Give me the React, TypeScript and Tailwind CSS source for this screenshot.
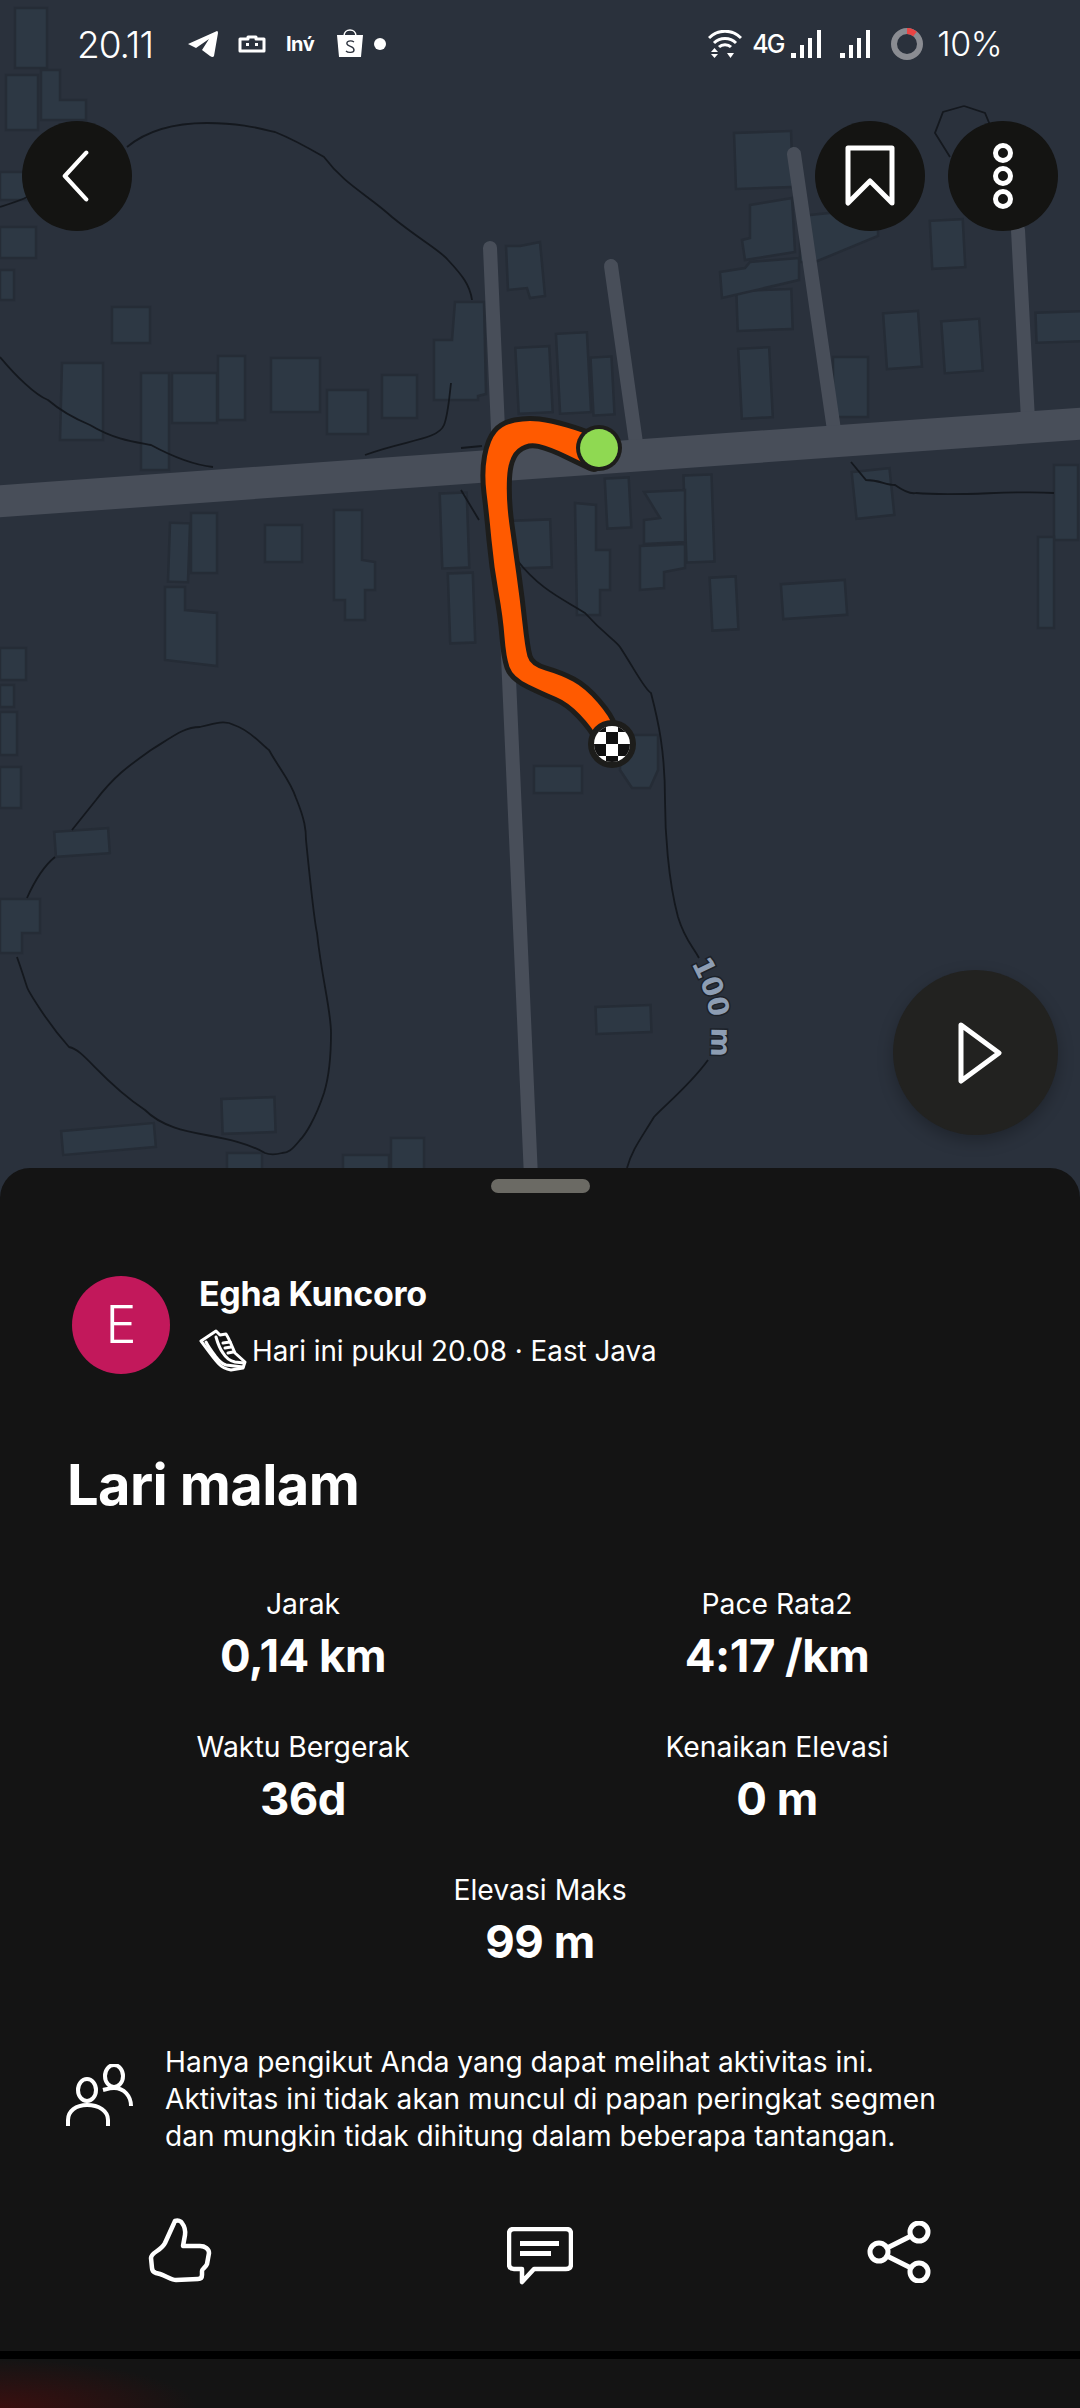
import React from "react";

const font = { fontFamily: "Inter, 'Liberation Sans', sans-serif" };

// x, y, w, h, rotation
const houses: number[][] = [
  [15, 8, 32, 60, 0], [6, 75, 32, 55, 0], [0, 172, 34, 28, 0], [0, 227, 36, 31, 0], [0, 270, 14, 30, 0],
  [112, 307, 38, 36, 0], [735, 132, 57, 56, -2], [737, 290, 55, 40, -2], [931, 220, 33, 48, -3],
  [885, 312, 35, 56, -4], [943, 320, 38, 52, -4], [1036, 312, 46, 30, -2], [740, 348, 31, 70, -3],
  [833, 357, 35, 60, 0], [517, 347, 34, 66, -3], [558, 333, 31, 80, -3], [592, 357, 21, 58, -3],
  [382, 375, 35, 43, 0], [327, 390, 41, 44, 0], [271, 358, 49, 54, 0], [141, 373, 28, 97, 0],
  [172, 373, 45, 50, 0], [218, 356, 27, 64, 0], [169, 523, 20, 59, 2], [191, 513, 26, 60, 0],
  [265, 525, 37, 37, 0], [441, 493, 27, 75, -2], [449, 573, 25, 70, -2], [513, 520, 38, 48, -2],
  [606, 478, 24, 50, -3], [685, 475, 28, 87, -2], [711, 577, 26, 53, -3], [782, 582, 64, 35, -4],
  [854, 470, 38, 47, -6], [1054, 465, 24, 75, 0], [1038, 537, 16, 91, 0], [0, 648, 26, 32, 0],
  [0, 685, 14, 22, 0], [0, 712, 17, 43, 0], [0, 767, 21, 41, 0], [534, 766, 48, 27, 0],
  [55, 830, 54, 25, -4], [596, 1006, 55, 27, -2], [222, 1098, 53, 35, -2], [62, 1127, 93, 24, -5],
  [227, 1153, 35, 20, 0], [343, 1155, 46, 20, 0], [391, 1138, 33, 35, 0],
];

const housesPoly = [
  "41,70 60,70 60,100 86,100 86,120 41,120",
  "520,246 540,242 545,296 530,298 527,288 508,290 506,246",
  "455,302 484,302 486,394 478,396 478,400 434,400 434,340 452,340",
  "750,205 792,198 795,252 745,260 742,240 750,238",
  "800,216 878,208 878,236 815,262 800,262",
  "720,272 745,268 750,262 799,258 799,280 722,298",
  "62,363 103,363 103,440 60,440",
  "165,587 185,587 185,610 217,613 217,666 165,660",
  "334,510 362,510 362,560 375,562 375,590 365,590 365,620 345,620 345,600 334,600",
  "575,503 596,505 596,550 610,550 610,590 600,590 600,615 577,615",
  "644,492 685,490 685,542 644,544 644,520 660,518",
  "640,546 685,544 685,568 664,572 664,588 640,590",
  "0,899 40,899 40,933 22,933 22,953 0,953",
  "620,735 658,735 658,770 650,788 632,788 620,770",
];

const contours = [
  "M0 207 C12 203 22 200 27 197 M127 147 C150 128 178 123 207 123 C240 123 258 128 275 132 C295 140 312 150 324 157 C345 185 368 195 392 217 C420 240 440 250 448 260 C462 275 470 285 472 300",
  "M0 357 C15 375 35 395 48 400 C62 412 78 420 90 425 C115 440 135 442 151 445 C175 458 195 465 213 467",
  "M451 383 C449 400 448 415 444 425 C438 440 405 440 365 455 M461 448 L482 446",
  "M461 490 L479 520 M517 560 C540 590 565 600 585 613 C605 635 615 640 620 647 C635 670 645 690 651 693 C658 720 665 750 665 800 C665 830 668 880 678 917 C685 940 692 945 699 958 M708 1060 C690 1085 665 1105 654 1117 C640 1140 632 1150 627 1168",
  "M96 800 C115 775 130 765 151 750 C175 735 185 727 200 727 C215 723 225 720 234 725 C250 730 262 745 269 750 C280 770 290 780 296 798 C305 820 306 830 306 840 C310 880 314 920 317 933 C322 980 331 1010 331 1033 C331 1060 328 1080 324 1093 C315 1120 305 1135 300 1140 C292 1150 288 1153 282 1153 C275 1155 270 1155 265 1153 C225 1130 175 1140 145 1110 C100 1080 85 1050 69 1047 C45 1020 28 990 27 987 C20 965 18 960 17 957 M27 898 C35 880 45 865 55 857 M72 830 L96 800",
  "M851 462 L866 480 C880 480 885 485 895 485 C905 492 912 494 916 493 C960 497 1010 490 1054 493",
  "M964 106 L985 113 L990 125 M964 106 L943 112 L935 133 L950 157",
];

// the track is uneven in width, so it's traced as an outline
const routeOutline = [
  [599, 440], [582, 432], [551, 423], [527, 420], [503, 425], [490, 440], [484, 473], [489, 513], [494, 567],
  [503, 617], [506, 657], [513, 677], [544, 692], [568, 702], [592, 727], [604, 750], [615, 735], [610, 717],
  [585, 688], [561, 675], [530, 666], [525, 647], [520, 600], [513, 550], [506, 500], [508, 457], [527, 441],
  [551, 447], [582, 462], [599, 470],
];

function smooth(pts: number[][]) {
  const mid = (a: number[], b: number[]) => `${(a[0] + b[0]) / 2} ${(a[1] + b[1]) / 2}`;
  let d = `M${mid(pts[pts.length - 1], pts[0])}`;
  pts.forEach((p, i) => {
    d += ` Q${p[0]} ${p[1]} ${mid(p, pts[(i + 1) % pts.length])}`;
  });
  return d + " Z";
}

function MapLayer() {
  return (
    <svg viewBox="0 0 1080 1200" className="block w-full h-full">
      <g fill="#2d3844" stroke="#252c36" strokeWidth="2.5">
        {houses.map(([x, y, w, h, r], i) => (
          <rect key={i} x={x} y={y} width={w} height={h} transform={`rotate(${r} ${x + w / 2} ${y + h / 2})`} />
        ))}
        {housesPoly.map((p, i) => (
          <polygon key={i} points={p} />
        ))}
      </g>
      <g fill="none" stroke="#14181e" strokeWidth="1.8">
        {contours.map((d, i) => (
          <path key={i} d={d} />
        ))}
      </g>
      <g stroke="#484e59" strokeLinecap="round" fill="none">
        <path d="M490 248 L532 1200" strokeWidth="14" />
        <path d="M611 266 L637 450" strokeWidth="14" />
        <path d="M794 154 L834 430" strokeWidth="14" />
        <path d="M1018 230 L1028 420" strokeWidth="14" />
        <path d="M-10 502 L1090 423" strokeWidth="32" strokeLinecap="butt" />
      </g>
      <path id="label100" d="M691 963 C705 990 715 1015 710 1062" fill="none" />
      <text fill="#8d9db3" stroke="#1c2129" strokeWidth="3" paintOrder="stroke" fontSize="28" fontWeight="700" fontFamily="'DejaVu Sans', sans-serif">
        <textPath href="#label100">100 m</textPath>
      </text>
      <path d={smooth(routeOutline)} fill="#ff5a00" stroke="#1d1d1b" strokeWidth="10" paintOrder="stroke" strokeLinejoin="round" />
      <circle cx="599" cy="448" r="23" fill="#1d1d1b" />
      <circle cx="599" cy="448" r="19" fill="#8fd952" />
      <circle cx="612" cy="744" r="24" fill="#1d1d1b" />
      <clipPath id="flag">
        <circle cx="612" cy="744" r="18" />
      </clipPath>
      <g clipPath="url(#flag)">
        <rect x="594" y="726" width="36" height="36" fill="#ffffff" />
        <path d="M606 732h12v12h-12z M606 756h12v12h-12z M594 744h12v12h-12z M618 744h12v12h-12z M594 720h12v12h-12z M618 720h12v12h-12z" fill="#111111" />
      </g>
    </svg>
  );
}

function StatusBar() {
  return (
    <div className="absolute top-[26px] left-0 w-full h-[36px] flex items-center justify-between pl-[77px] pr-[78px] text-white">
      <div className="flex items-center">
        <span className="text-[37px] font-light leading-none tracking-[-1px]">20.11</span>
        <svg viewBox="0 0 30 26" className="w-[30px] h-[26px] ml-[35px]" fill="#ffffff">
          <path d="M0 13 L29 0 Q30 0 30 2 L26 25 Q25 27 22 25 L14 19 L21 8 L8 17 Z" />
        </svg>
        <svg viewBox="0 0 28 18" className="w-[28px] h-[18px] ml-[20px]" fill="none">
          <path d="M2 4 H10 V2 H18 V4 H26 V16 H2 Z" stroke="#ffffff" strokeWidth="3" strokeLinejoin="round" />
          <rect x="8" y="8" width="3" height="3" fill="#ffffff" />
          <rect x="17" y="8" width="3" height="3" fill="#ffffff" />
        </svg>
        <span className="ml-[20px] w-[30px] text-[20px] font-bold leading-none tracking-[-0.5px]">Inv́</span>
        <svg viewBox="0 0 28 30" className="w-[28px] h-[30px] ml-[20px] -mt-[2px]">
          <path d="M8 8 C8 0 20 0 20 8" fill="none" stroke="#ffffff" strokeWidth="1.6" />
          <path d="M1 7 H27 L25 29 H3 Z" fill="#ffffff" />
          <path d="M18 14 C15 12 10 13 11 16 C12 19 18 18 18 22 C18 25 12 25 10 23" fill="none" stroke="#2a303c" strokeWidth="1.4" />
        </svg>
        <span className="w-[12px] h-[12px] rounded-full bg-white ml-[10px]" />
      </div>
      <div className="flex items-center">
        <svg viewBox="0 0 34 28" className="w-[34px] h-[28px]" fill="none" stroke="#ffffff" strokeWidth="3">
          <path d="M1 8 C10 -1 24 -1 33 8" />
          <path d="M6 13 C12 7 22 7 28 13" />
          <path d="M11 17 C14 14 20 14 23 17" />
          <path d="M3 22 H10 L6.500 18 Z M3 24 H10 L6.500 28 Z" fill="#ffffff" stroke="none" />
          <path d="M19 23 H26 L22.500 28 Z" fill="#ffffff" stroke="none" />
        </svg>
        <span className="ml-[10px] w-[30px] text-[25px] font-medium leading-none tracking-[-2px]">4G</span>
        {[0, 1].map((k) => (
          <svg key={k} viewBox="0 0 31 28" className={k === 0 ? "w-[31px] h-[28px] ml-[9px]" : "w-[31px] h-[28px] ml-[18px]"} fill="#ffffff">
            <rect x="0" y="23" width="5" height="5" />
            <rect x="9" y="15" width="4" height="13" />
            <rect x="17" y="8" width="4" height="20" />
            <rect x="26" y="0" width="4" height="28" />
          </svg>
        ))}
        <svg viewBox="0 0 32 32" className="w-[32px] h-[32px] ml-[20px]" fill="none">
          <circle cx="16" cy="16" r="13" stroke="#8a8c92" strokeWidth="6" />
          <path d="M16 3 A13 13 0 0 1 24 6" stroke="#e94444" strokeWidth="6" />
        </svg>
        <span className="ml-[14px] text-[34px] font-light leading-none tracking-[-0.5px]">10%</span>
      </div>
    </div>
  );
}

function RoundButton({ className, children }: { className: string; children: React.ReactNode }) {
  return (
    <div className={`absolute rounded-full flex items-center justify-center ${className}`}>{children}</div>
  );
}

function Stat({ label, value, className }: { label: string; value: string; className?: string }) {
  return (
    <div className={`flex flex-col items-center text-white ${className ?? ""}`}>
      <span className="text-[28.300px] leading-[36px] font-normal">{label}</span>
      <span className="text-[45.500px] leading-[54px] font-bold mt-[7px] tracking-[-0.5px]">{value}</span>
    </div>
  );
}

export default function App() {
  return (
    <div className="relative w-[1080px] h-[2408px] flex flex-col bg-[#141414] overflow-hidden" style={font}>
      <div className="relative w-full h-[1200px] shrink-0 bg-[#2a313c]">
        <MapLayer />
        <StatusBar />
        <RoundButton className="left-[22px] top-[121px] w-[110px] h-[110px] bg-[#141412]">
          <svg viewBox="0 0 30 54" className="w-[28px] h-[52px] -ml-[2px]" fill="none" stroke="#ffffff" strokeWidth="4.500" strokeLinecap="round" strokeLinejoin="round">
            <path d="M26 2 L3 27 L26 52" />
          </svg>
        </RoundButton>
        <RoundButton className="left-[815px] top-[121px] w-[110px] h-[110px] bg-[#141412]">
          <svg viewBox="0 0 50 62" className="w-[50px] h-[62px]" fill="none" stroke="#ffffff" strokeWidth="5" strokeLinejoin="round">
            <path d="M3 3 H47 V58 L25 36 L3 58 Z" />
          </svg>
        </RoundButton>
        <RoundButton className="left-[948px] top-[121px] w-[110px] h-[110px] bg-[#141412]">
          <svg viewBox="0 0 22 66" className="w-[22px] h-[66px]" fill="none" stroke="#ffffff" strokeWidth="5">
            <circle cx="11" cy="10" r="7.500" />
            <circle cx="11" cy="33" r="7.500" />
            <circle cx="11" cy="56" r="7.500" />
          </svg>
        </RoundButton>
        <RoundButton className="left-[893px] top-[970px] w-[165px] h-[165px] bg-[#222220] shadow-[0_6px_16px_rgba(0,0,0,0.25)]">
          <svg viewBox="0 0 44 62" className="w-[44px] h-[62px] ml-[8px]" fill="none" stroke="#ffffff" strokeWidth="5" strokeLinejoin="round">
            <path d="M3 3 L41 31 L3 59 Z" />
          </svg>
        </RoundButton>
      </div>

      <div className="relative -mt-[32px] w-full h-[1240px] shrink-0 rounded-t-[30px] bg-[#141414] flex flex-col text-white">
        <div className="mt-[11px] mx-auto w-[99px] h-[14px] rounded-[7px] bg-[#6b6a64]" />

        <div className="mt-[83px] h-[98px] ml-[72px] flex items-center">
          <div className="w-[98px] h-[98px] rounded-full bg-[#c2185b] flex items-center justify-center">
            <span className="text-[52px] font-light leading-none">E</span>
          </div>
          <div className="ml-[29px] flex flex-col">
            <span className="text-[34px] leading-[42px] font-bold tracking-[-0.3px] -mt-[6px]">Egha Kuncoro</span>
            <div className="flex items-center mt-[16px]">
              <svg viewBox="6 8 48 44" className="w-[48px] h-[44px] -mt-[3px]" fill="none" stroke="#ffffff" strokeWidth="3" strokeLinejoin="round" strokeLinecap="round">
                <path d="M8 21 L23 11 L27 15 L33 14 C37 20 39 27 42 33 L52 42 L50 48 L38 50 C33 49 30 48 27 45 C23 41 20 37 17 33 Z" />
                <path d="M13 22 C16 28 20 33 23 37 C26 41 30 44 33 45 L50 47 M23 17 C25 24 27 29 30 33 C33 38 37 41 42 42 L51 43" />
                <path d="M30 23 L37 22 M32 28 L38 27 M35 33 L40 32" />
              </svg>
              <span className="ml-[5px] text-[27.800px] leading-[36px]">Hari ini pukul 20.08 · East Java</span>
            </div>
          </div>
        </div>

        <h1 className="mt-[78px] ml-[67px] text-[56px] leading-[66px] font-bold tracking-[-0.6px]">Lari malam</h1>

        <div className="mt-[68px] mx-[66px] grid grid-cols-2 gap-y-[46px]">
          <Stat label="Jarak" value="0,14 km" />
          <Stat label="Pace Rata2" value="4:17 /km" />
          <Stat label="Waktu Bergerak" value="36d" />
          <Stat label="Kenaikan Elevasi" value="0 m" />
          <Stat label="Elevasi Maks" value="99 m" className="col-span-2" />
        </div>

        <div className="mt-[75px] ml-[66px] flex items-center">
          <svg viewBox="0 0 68 62" className="w-[68px] h-[62px] -mt-[10px]" fill="none" stroke="#ffffff" strokeWidth="4" strokeLinecap="butt">
            <ellipse cx="21" cy="26" rx="9" ry="11" />
            <path d="M2 62 V56 C2 47 10 41 21 41 C33 41 42 47 42 56 V62" />
            <ellipse cx="48" cy="12" rx="9" ry="11" />
            <path d="M37 26 C41 25 44 24 48 24 C58 24 65 32 65 42" />
          </svg>
          <p className="ml-[31px] text-[28.100px] leading-[37px]">
            Hanya pengikut Anda yang dapat melihat aktivitas ini.
            <br />
            Aktivitas ini tidak akan muncul di papan peringkat segmen
            <br />
            dan mungkin tidak dihitung dalam beberapa tantangan.
          </p>
        </div>

        <div className="mt-[56px] h-[80px] flex items-center pl-[140px]">
          <svg viewBox="0 0 80 80" className="w-[80px] h-[80px]" fill="none" stroke="#ffffff" strokeWidth="4.500" strokeLinejoin="round">
            <path d="M35 10 C38 9 41 10 42 12 C45 16 45.500 20 45 24 L43 35 H60 C65 35 69 38 69 42 L67 53 C66 56 62 58 62 60 V64 C62 67 60 68 58 68 L36 69 C32 69 26 65 20 63 L16 62 C13 61 12 59 12 57 L11 47 C11 44 14 42 17 40 C20 38 23 36 25 32 Z" />
          </svg>
          <svg viewBox="0 0 66 58" className="w-[66px] h-[58px] ml-[287px] mt-[10px]" fill="none">
            <path d="M7 2 H59 Q64 2 64 7 V37 Q64 42 59 42 H27 L15 55 V42 H7 Q2 42 2 37 V7 Q2 2 7 2 Z" stroke="#ffffff" strokeWidth="4.500" strokeLinejoin="round" />
            <rect x="13" y="14" width="39" height="5" fill="#ffffff" />
            <rect x="13" y="24" width="31" height="5" fill="#ffffff" />
          </svg>
          <svg viewBox="0 0 66 62" className="w-[66px] h-[62px] ml-[294px] mt-[2px]" fill="none" stroke="#ffffff" strokeWidth="5">
            <circle cx="52" cy="11" r="9" />
            <circle cx="12" cy="31" r="9" />
            <circle cx="52" cy="51" r="9" />
            <path d="M20 27 L44 15 M20 35 L44 47" />
          </svg>
        </div>

        <div className="absolute left-0 right-0 top-[1183px] h-[8px] bg-black" />
      </div>

      <div className="absolute left-0 bottom-0 w-[200px] h-[49px] bg-[radial-gradient(ellipse_at_bottom_left,#3a0f0f_0%,#141414_70%)]" />
    </div>
  );
}
